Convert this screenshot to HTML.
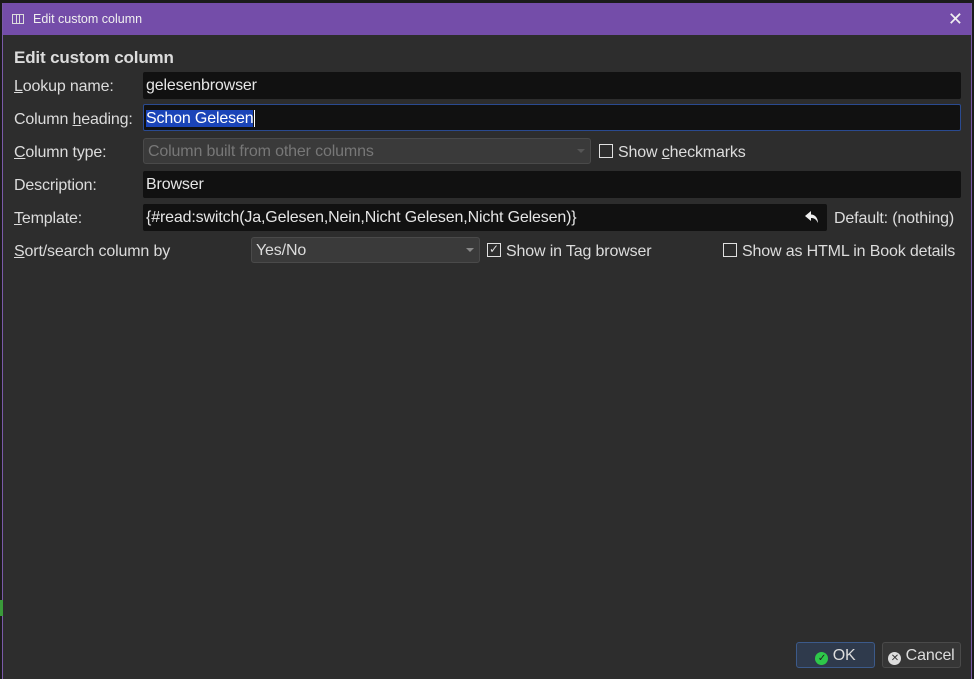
<!DOCTYPE html>
<html><head><meta charset="utf-8"><style>
*{margin:0;padding:0;box-sizing:border-box}
body{width:974px;height:679px;background:#1b1b1b;position:relative;overflow:hidden;font-family:"Liberation Sans",sans-serif;font-size:16px;letter-spacing:-0.15px;color:#dcdcdc}
.win{position:absolute;left:2px;top:3px;width:970px;height:676px;background:#2d2d2d;border-left:1px solid #7a5aa8;border-right:1px solid #7a5aa8}
.title{position:absolute;left:0;top:0;width:100%;height:32px;background:#744da9;color:#f0f0f0;font-size:12.5px;letter-spacing:0;line-height:32px;padding-left:30px}
.a{position:absolute;white-space:nowrap}
.in{position:absolute;background:#111;height:27px;line-height:28px;padding-left:3px;color:#e6e6e6;border-radius:2px}
.cb{position:absolute;width:14px;height:14px;border:1.5px solid #e0e0e0}
.combo{position:absolute;background:#3a3a3a;border:1px solid #4a4a4a;border-radius:3px;height:26px;line-height:26px;padding-left:4px}
.arr{position:absolute;right:5px;top:10px;width:0;height:0;border-left:4px solid transparent;border-right:4px solid transparent;border-top:4px solid #888}
.btn{position:absolute;height:26px;border-radius:3px;line-height:25px;text-align:center;font-size:16px}
u{text-decoration:underline}
</style></head><body>
<div class="win">
<div class="title"><span style="position:absolute;left:9px;top:11px;width:12px;height:10px;border:1px solid #ddd"></span><span style="position:absolute;left:13px;top:11px;width:4px;height:10px;border-left:1px solid #ddd;border-right:1px solid #ddd"></span>Edit custom column<span style="position:absolute;right:8px;top:0;font-size:18px">✕</span></div>
<div class="a" style="left:11px;top:45px;font-weight:bold;font-size:17px">Edit custom column</div>
<div class="a" style="left:11px;top:75px"><u>L</u>ookup name:</div>
<div class="in" style="left:140px;top:69px;width:818px">gelesenbrowser</div>
<div class="a" style="left:11px;top:108px">Column <u>h</u>eading:</div>
<div class="in" style="left:140px;top:101px;width:818px;border:1px solid #2a4a90;line-height:28px;padding-left:2px"><span style="background:#1a44b8;color:#fff">Schon Gelesen</span><span style="border-left:1px solid #fff;margin-left:1px"></span></div>
<div class="a" style="left:11px;top:141px"><u>C</u>olumn type:</div>
<div class="combo" style="left:140px;top:135px;width:448px;color:#777">Column built from other columns<div class="arr" style="border-top-color:#555"></div></div>
<div class="cb" style="left:596px;top:141px"></div>
<div class="a" style="left:615px;top:141px">Show <u>c</u>heckmarks</div>
<div class="a" style="left:11px;top:174px">Description:</div>
<div class="in" style="left:140px;top:168px;width:818px">Browser</div>
<div class="a" style="left:11px;top:207px"><u>T</u>emplate:</div>
<div class="in" style="left:140px;top:201px;width:684px">{#read:switch(Ja,Gelesen,Nein,Nicht Gelesen,Nicht Gelesen)}<svg style="position:absolute;right:8px;top:7px" width="14" height="13" viewBox="0 0 14 13"><path d="M6 0 L0 5 L6 10 L6 7 C9 7 11 8 13 12 C13 7 10 3.5 6 3.5 Z" fill="#eee"/></svg></div>
<div class="a" style="left:831px;top:207px">Default: (nothing)</div>
<div class="a" style="left:11px;top:240px"><u>S</u>ort/search column by</div>
<div class="combo" style="left:248px;top:234px;width:229px">Yes/No<div class="arr"></div></div>
<div class="cb" style="left:484px;top:240px;font-size:12px;line-height:10px;text-align:center">✓</div>
<div class="a" style="left:503px;top:240px">Show in Tag browser</div>
<div class="cb" style="left:720px;top:240px"></div>
<div class="a" style="left:739px;top:240px">Show as HTML in Book details</div>
<div class="btn" style="left:793px;top:639px;width:79px;background:#2f3a4c;border:1px solid #3c5a8a"><span style="display:inline-block;width:13px;height:13px;border-radius:50%;background:#2ec84a;color:#222;font-size:10px;line-height:13px;vertical-align:-1px">✓</span> OK</div>
<div class="btn" style="left:879px;top:639px;width:79px;background:#363636;border:1px solid #4a4a4a"><span style="display:inline-block;width:13px;height:13px;border-radius:50%;background:#ddd;color:#333;font-size:10px;line-height:13px;vertical-align:-1px">✕</span> Cancel</div>
</div>
<div style="position:absolute;left:0;top:600px;width:3px;height:16px;background:#3a9a3a"></div>
</body></html>
